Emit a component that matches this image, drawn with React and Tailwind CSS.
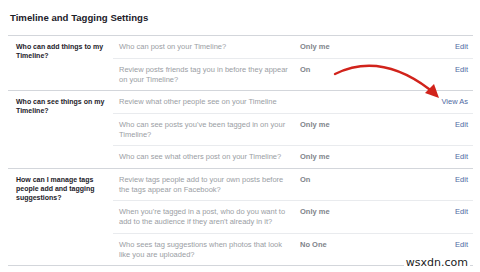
import React from 'react';

const sections = [
  {
    label: 'Who can add things to my Timeline?',
    rows: [
      { text: 'Who can post on your Timeline?', value: 'Only me', action: 'Edit' },
      { text: 'Review posts friends tag you in before they appear on your Timeline?', value: 'On', action: 'Edit' },
    ],
  },
  {
    label: 'Who can see things on my Timeline?',
    rows: [
      { text: 'Review what other people see on your Timeline', value: '', action: 'View As' },
      { text: "Who can see posts you've been tagged in on your Timeline?", value: 'Only me', action: 'Edit' },
      { text: 'Who can see what others post on your Timeline?', value: 'Only me', action: 'Edit' },
    ],
  },
  {
    label: 'How can I manage tags people add and tagging suggestions?',
    rows: [
      { text: 'Review tags people add to your own posts before the tags appear on Facebook?', value: 'On', action: 'Edit' },
      { text: "When you're tagged in a post, who do you want to add to the audience if they aren't already in it?", value: 'Only me', action: 'Edit' },
      { text: 'Who sees tag suggestions when photos that look like you are uploaded?', value: 'No One', action: 'Edit' },
    ],
  },
];

const SettingRow = ({ row, first }) => (
  <div className={`flex items-start pt-[6px] pb-[5.5px] text-[7.5px] leading-[10px] ${first ? '' : 'border-t border-[#e9ebee]'}`}>
    <div className="w-[187px] shrink-0 pl-[6px] pr-[12px] text-[#9a9ea4]">
      {row.text}
    </div>
    <div className="flex-1 font-bold text-[#80848a]">
      {row.value}
    </div>
    <div className="pr-[5px] text-[#4e69a2]">
      {row.action}
    </div>
  </div>
);

export default function App() {
  return (
    <div className="relative w-[480px] h-[272px] overflow-hidden bg-white font-['Liberation_Sans',Arial,sans-serif]">
      <div className="h-[35px] pl-[10px] pt-[12px] text-[9.6px] leading-[12px] font-bold text-[#1d2129]">
        Timeline and Tagging Settings
      </div>

      <div className="ml-[8px] mr-[7px] border-b border-[#d3d6db]">
        {sections.map((s) => (
          <div key={s.label} className="flex border-t border-[#d3d6db]">
            <div className="w-[105px] shrink-0 pl-[8px] pr-[3px] pt-[6px] text-[7px] leading-[9px] font-bold text-[#1d2129]">
              {s.label}
            </div>
            <div className="flex-1">
              {s.rows.map((r, i) => (
                <SettingRow key={r.text} row={r} first={i === 0} />
              ))}
            </div>
          </div>
        ))}
      </div>

      {/* red annotation arrow pointing to View As */}
      <svg className="absolute left-0 top-0" width="480" height="272" viewBox="0 0 480 272">
        <path d="M335 74 Q380 52 429 89" fill="none" stroke="#d1231b" strokeWidth="2.4" strokeLinecap="round" />
        <polygon points="439,98 425,93 434,84" fill="#d1231b" />
      </svg>

      <div className="absolute right-[10px] bottom-[3px] bg-white px-[2px] text-[11px] leading-[13px] text-[#222] font-['DejaVu_Sans',sans-serif]">
        wsxdn.com
      </div>
    </div>
  );
}
